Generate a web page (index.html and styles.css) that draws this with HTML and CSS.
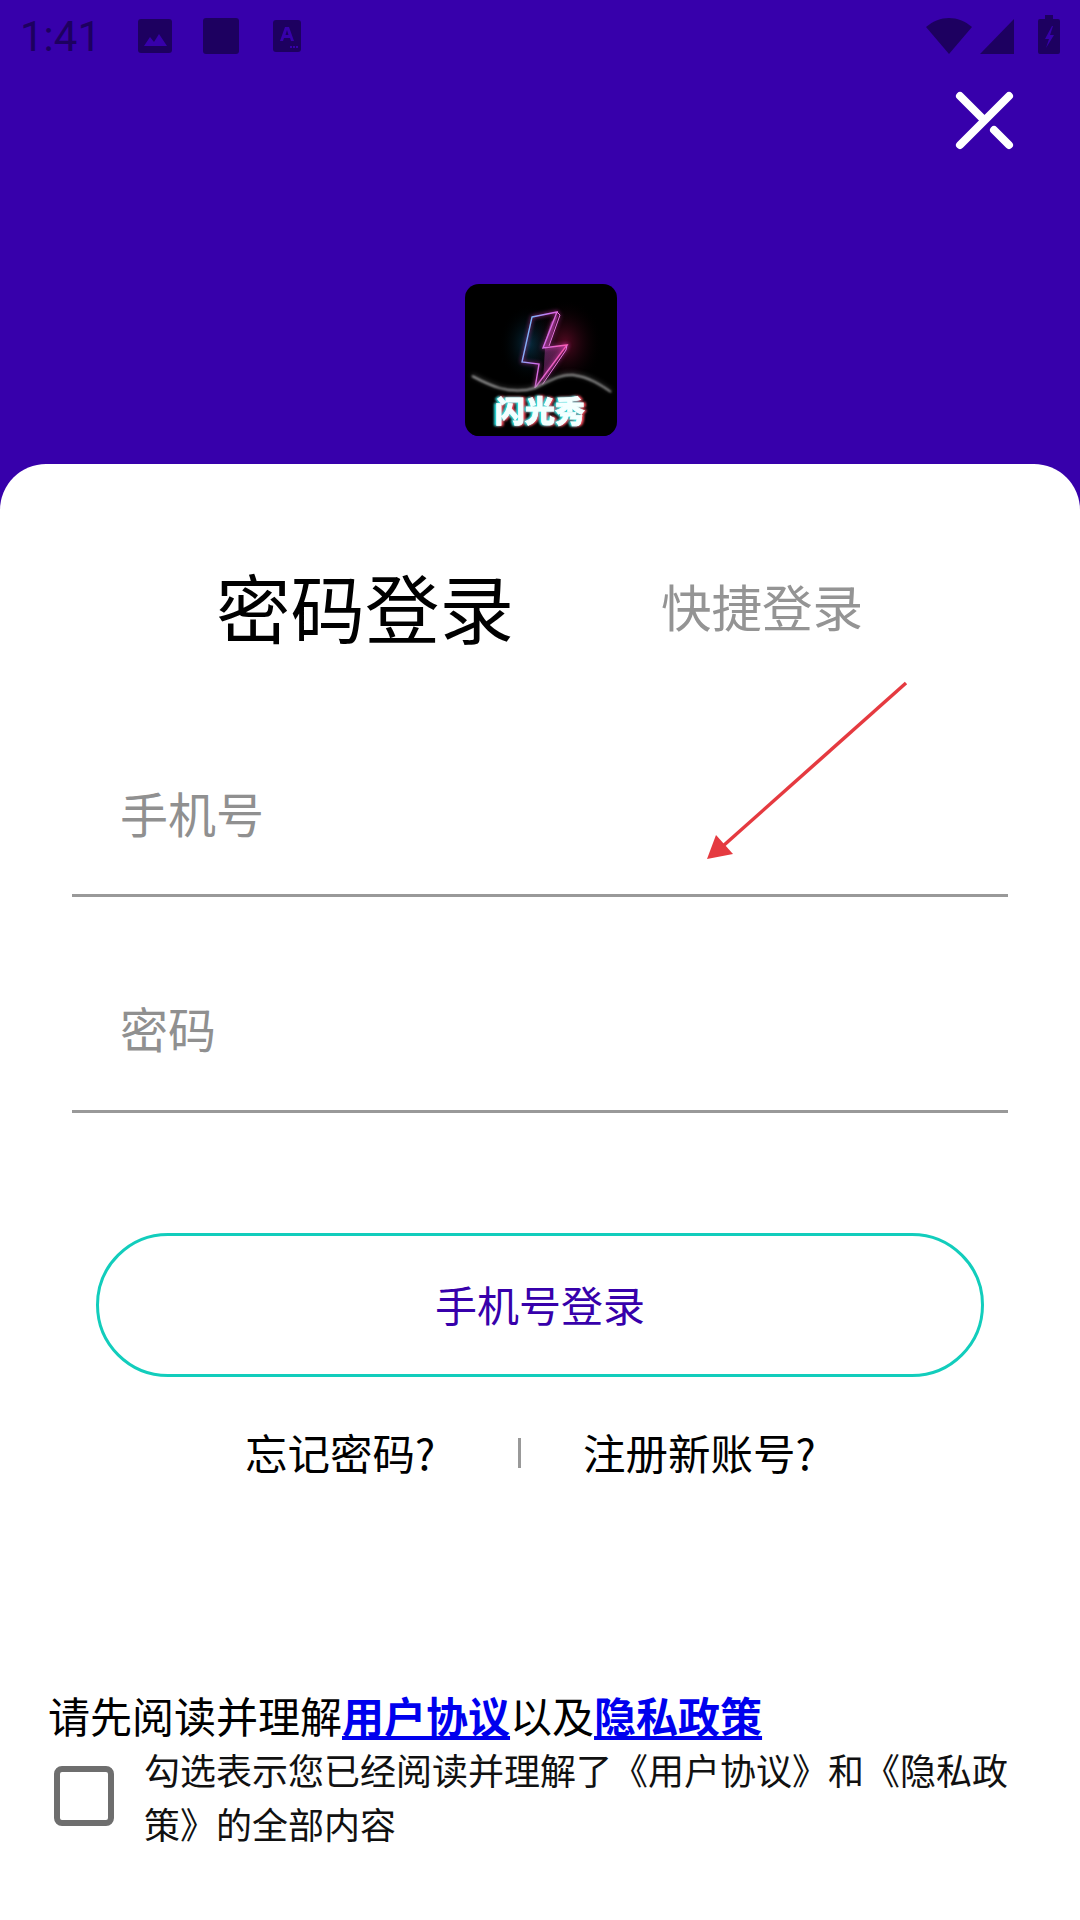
FILE: index.html
```html
<!DOCTYPE html>
<html lang="zh">
<head>
    <meta charset="UTF-8">
    <title>闪光秀</title>
    <link rel="stylesheet" href="styles.css">
</head>

<body>
    <div class="page">

        <div class="topArea">
            <div class="statusBar">
                <span class="time">1:41</span>
                <svg class="noticeIcon" width="34" height="34" viewBox="0 0 34 34">
                    <rect class="dark" width="34" height="34" rx="3"/>
                    <path class="cut" d="M6 27l6-9 4 5 5-8 8 12z"/>
                </svg>
                <svg class="noticeIcon" width="36" height="36" viewBox="0 0 36 36">
                    <rect class="dark" width="36" height="36" rx="3"/>
                </svg>
                <svg class="noticeIcon noticeLast" width="28" height="32" viewBox="0 0 28 32">
                    <rect class="dark" width="28" height="32" rx="3"/>
                    <path class="cut" d="M12 7h4l5 14h-3l-1-3h-6l-1 3H7zM12.500 15h3L14 10zM17 26h2v2h-2zM20 26h2v2h-2zM23 26h2v2h-2z"/>
                </svg>
                <div class="statusRight">
                    <svg class="wifiIcon" width="46" height="36" viewBox="0 0 46 36">
                        <path class="dark" d="M23 36L0 9C14 -3 32 -3 46 9z"/>
                    </svg>
                    <svg class="signalIcon" width="34" height="35" viewBox="0 0 34 35">
                        <path class="dark" d="M34 0v35H0z"/>
                    </svg>
                    <svg width="22" height="39" viewBox="0 0 22 39">
                        <path class="dark" d="M7 0h8v4h5a2 2 0 0 1 2 2v31a2 2 0 0 1-2 2H2a2 2 0 0 1-2-2V6a2 2 0 0 1 2-2h5z"/>
                        <path class="cut" d="M14 11l-7 13h4l-3 9 8-13h-4l3-9z"/>
                    </svg>
                </div>
            </div>

            <svg class="closeIcon" width="60" height="60" viewBox="0 0 60 60">
                <path d="M55 6L6 55M6 6L30 30M40 40L55 55"/>
            </svg>

            <div class="logo">
                <svg width="152" height="152" viewBox="0 0 152 152">
                    <defs>
                        <linearGradient id="boltLine" x1="0" y1="0" x2="1" y2="0.5">
                            <stop offset="0" stop-color="#3fe6ff"/>
                            <stop offset="0.5" stop-color="#d070f0"/>
                            <stop offset="1" stop-color="#ff5aa8"/>
                        </linearGradient>
                        <radialGradient id="boltGlow" cx="0.5" cy="0.5" r="0.5">
                            <stop offset="0" stop-color="#8a1038" stop-opacity="0.6"/>
                            <stop offset="1" stop-color="#000" stop-opacity="0"/>
                        </radialGradient>
                        <radialGradient id="cyanGlow" cx="0.5" cy="0.5" r="0.5">
                            <stop offset="0" stop-color="#0a4a6a" stop-opacity="0.6"/>
                            <stop offset="1" stop-color="#000" stop-opacity="0"/>
                        </radialGradient>
                        <linearGradient id="boltFill" x1="0" y1="0" x2="0" y2="1">
                            <stop offset="0" stop-color="#e060d8"/>
                            <stop offset="1" stop-color="#a03090"/>
                        </linearGradient>
                    </defs>
                    <rect width="152" height="152" fill="#000"/>
                    <rect x="62" y="14" width="76" height="90" fill="url(#boltGlow)"/>
                    <rect x="34" y="20" width="60" height="80" fill="url(#cyanGlow)"/>
                    <path d="M86 38L93 31L84 62L78 64ZM80 64L102 61L78 98Z" fill="url(#boltFill)" opacity="0.4"/>
                    <path class="boltPart" d="M67 33L92 28L78 64L102 61L70 104L74 80L57 78Z" fill="none" stroke="url(#boltLine)" stroke-width="1.4"/>
                    <path class="boltPart" d="M92 28L95 31L84 62M102 61L101 66L75 104" fill="none" stroke="#e878e0" stroke-width="1"/>
                    <path class="waveFill" d="M7 92C22 100 44 112 70 104C86 96 96 90 108 91C124 93 136 101 146 108V152H7Z"/>
                    <path class="waveLine" d="M7 92C22 100 44 112 70 104C86 96 96 90 108 91C124 93 136 101 146 108"/>
                    <text class="logoText" x="75" y="138">闪光秀</text>
                </svg>
            </div>
        </div>

        <div class="sheet">
            <div class="tabs">
                <span class="tabOn">密码登录</span>
                <span class="tabOff">快捷登录</span>
            </div>

            <div class="field fieldPhone">手机号</div>
            <div class="field fieldPass">密码</div>

            <div class="loginBtn">手机号登录</div>

            <div class="links">
                <span class="linkLeft">忘记密码?</span>
                <span class="linkBar"></span>
                <span class="linkRight">注册新账号?</span>
            </div>

            <div class="agree">
                <p class="agreeTitle">请先阅读并理解<a href="#">用户协议</a>以及<a href="#">隐私政策</a></p>
                <div class="agreeRow">
                    <span class="checkBox"></span>
                    <p class="agreeText">勾选表示您已经阅读并理解了《用户协议》和《隐私政策》的全部内容</p>
                </div>
            </div>

            <svg class="redArrow" width="216" height="196" viewBox="0 0 216 196">
                <path class="arrowLine" d="M201 6L18 169"/>
                <path class="arrowHead" d="M2 182L11 158L28 177Z"/>
            </svg>
        </div>

    </div>
</body>
</html>
```

FILE: styles.css
```css
* {
    margin: 0;
    padding: 0;
    box-sizing: border-box;
}

body {
    width: 1080px;
    height: 1920px;
    overflow: hidden;
    background-color: #3700ab;
    font-family: "Noto Sans CJK SC", "Noto Sans", sans-serif;
}

.page {
    display: flex;
    flex-direction: column;
    height: 1920px;
}

/* 상단 보라색 영역 */
.topArea {
    position: relative;
    height: 464px;
}

.statusBar {
    display: flex;
    align-items: center;
    height: 72px;
    padding: 0 20px;
}

.time {
    width: 118px;
    font-family: "Roboto", sans-serif;
    font-size: 42px;
    color: #1d0060;
}

.noticeIcon {
    margin-right: 31px;
}

.noticeLast {
    margin-left: 3px;
}

.statusRight {
    display: flex;
    align-items: flex-end;
    margin-top: -3px;
    margin-left: auto;
}

.wifiIcon {
    margin-right: 8px;
}

.signalIcon {
    margin-right: 24px;
}

.dark {
    fill: #1d0060;
}

.cut {
    fill: #3700ab;
}

.closeIcon {
    position: absolute;
    left: 954px;
    top: 90px;
}

.closeIcon path {
    fill: none;
    stroke: #fff;
    stroke-width: 8;
    stroke-linecap: round;
}

.logo {
    width: 152px;
    height: 152px;
    margin: 212px 0 0 465px;
    border-radius: 14px;
    overflow: hidden;
}

.logo svg {
    display: block;
}

.boltPart {
    filter: drop-shadow(0 0 2px #e040c0);
}

.waveFill {
    fill: #000;
}

.waveLine {
    fill: none;
    stroke: #b8b8b8;
    stroke-width: 1.5;
    filter: blur(0.8px) drop-shadow(0 -1px 2px #666);
}

.logoText {
    font-size: 30px;
    font-weight: 900;
    text-anchor: middle;
    fill: #f4ffff;
    stroke: #f4ffff;
    stroke-width: 0.8;
    filter: blur(0.5px) drop-shadow(-2px 0 1px #20e8e8) drop-shadow(2px 0 1px #ff5060);
}

/* 흰색 시트 */
.sheet {
    position: relative;
    flex: 1;
    padding-top: 85px;
    background-color: #fff;
    border-radius: 46px 46px 0 0;
}

.tabs {
    display: flex;
    align-items: center;
    height: 112px;
    padding-left: 216px;
}

.tabOn {
    width: 445px;
    font-size: 74.5px;
    color: #000;
}

.tabOff {
    font-size: 50.5px;
    color: #949494;
}

.field {
    margin: 0 72px;
    padding-left: 48px;
    border-bottom: 3px solid #999;
    font-size: 48px;
    line-height: 70px;
    color: #909090;
}

.fieldPhone {
    height: 236px;
    padding-top: 116px;
}

.fieldPass {
    height: 216px;
    padding-top: 95px;
}

.loginBtn {
    height: 144px;
    margin: 120px 96px 0;
    border: 3px solid #12cdbc;
    border-radius: 72px;
    font-size: 42px;
    line-height: 136px;
    text-align: center;
    color: #3700ab;
}

.links {
    display: flex;
    align-items: center;
    height: 60px;
    margin-top: 44px;
    padding-left: 245px;
    font-size: 42.5px;
    color: #000;
}

.linkLeft {
    width: 273px;
}

.linkBar {
    width: 3px;
    height: 30px;
    margin: 4px 62px 0 0;
    background-color: #999;
}

.agree {
    margin-top: 207px;
    padding: 0 60px 0 48px;
}

.agreeTitle {
    height: 54px;
    font-size: 42px;
    line-height: 54px;
    color: #000;
}

.agreeTitle a {
    font-weight: 700;
    color: #0000ee;
}

.agreeRow {
    display: flex;
    align-items: center;
}

.checkBox {
    flex: none;
    width: 60px;
    height: 60px;
    margin: 0 30px 0 6px;
    border: 6px solid #6e6e6e;
    border-radius: 8px;
}

.agreeText {
    font-size: 36px;
    line-height: 54px;
    color: #111;
}

.redArrow {
    position: absolute;
    left: 705px;
    top: 213px;
}

.arrowLine {
    fill: none;
    stroke: #e53a40;
    stroke-width: 3.5;
}

.arrowHead {
    fill: #e53a40;
}
```
